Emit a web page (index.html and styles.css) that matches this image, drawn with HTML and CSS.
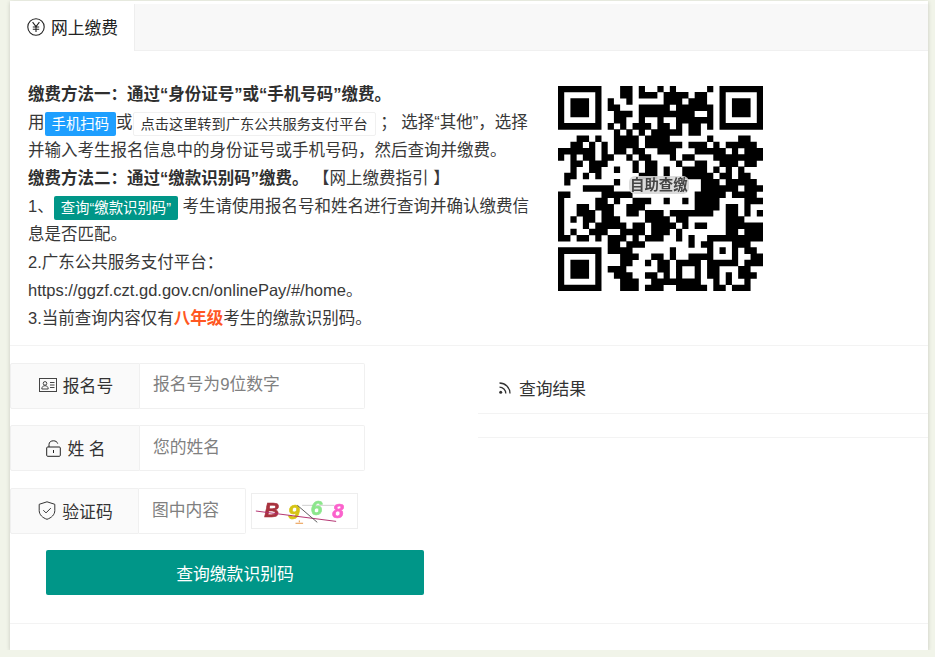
FILE: index.html
```html
<!DOCTYPE html>
<html lang="zh-CN">
<head>
<meta charset="utf-8">
<title>网上缴费</title>
<link rel="stylesheet" href="styles.css">
</head>
<body>
<main class="card">
  <div class="tabs">
    <div class="tab">
      <svg class="ico-rmb" viewBox="0 0 18 18"><circle cx="9" cy="9" r="8.2"/><path d="M5.6 4.2 9 8.6l3.4-4.4M9 8.6v5.4M5.8 9h6.4M5.8 11.2h6.4"/></svg>
      <span>网上缴费</span>
    </div>
    <div class="tab-fill"></div>
  </div>

  <section class="intro">
    <div class="intro-text">
      <p><b>缴费方法一：通过“身份证号”或“手机号码”缴费。</b></p>
      <p>用<a class="btn btn-blue">手机扫码</a>或<a class="btn btn-plain">点击这里转到广东公共服务支付平台</a> ； 选择“其他”，选择并输入考生报名信息中的身份证号或手机号码，然后查询并缴费。</p>
      <p><b>缴费方法二：通过“缴款识别码”缴费。</b> 【网上缴费指引 】</p>
      <p>1、<a class="btn btn-teal">查询“缴款识别码”</a> 考生请使用报名号和姓名进行查询并确认缴费信息是否匹配。</p>
      <p>2.广东公共服务支付平台：</p>
      <p>https://ggzf.czt.gd.gov.cn/onlinePay/#/home。</p>
      <p>3.当前查询内容仅有<b class="hl">八年级</b>考生的缴款识别码。</p>
    </div>
    <div class="qr">
      <svg class="qr-code" viewBox="0 0 33 33">
        <path d="M0 .5h7M26 .5h7M0 1.5h1M6 1.5h1M26 1.5h1M32 1.5h1M0 2.5h1M2 2.5h3M6 2.5h1M26 2.5h1M28 2.5h3M32 2.5h1M0 3.5h1M2 3.5h3M6 3.5h1M26 3.5h1M28 3.5h3M32 3.5h1M0 4.5h1M2 4.5h3M6 4.5h1M26 4.5h1M28 4.5h3M32 4.5h1M0 5.5h1M6 5.5h1M26 5.5h1M32 5.5h1M0 6.5h7M26 6.5h7
        M0 26.5h7M0 27.5h1M6 27.5h1M0 28.5h1M2 28.5h3M6 28.5h1M0 29.5h1M2 29.5h3M6 29.5h1M0 30.5h1M2 30.5h3M6 30.5h1M0 31.5h1M6 31.5h1M0 32.5h7
        M10 .5h2M13 .5h1M16 .5h1M18 .5h1M24 .5h1
        M10 1.5h2M13 1.5h3M17 1.5h4M22 1.5h2
        M8 2.5h1M11 2.5h1M17 2.5h3M21 2.5h3
        M8 3.5h2M13 3.5h5M19 3.5h6
        M9 4.5h3M13 4.5h9M24 4.5h1
        M9 5.5h2M13 5.5h1M16 5.5h1M19 5.5h6
        M8 6.5h1M10 6.5h1M12 6.5h3M16 6.5h2M19 6.5h1M21 6.5h2M24 6.5h1
        M9 7.5h1M11 7.5h1M13 7.5h1M15 7.5h5M21 7.5h2
        M3 8.5h2M6 8.5h1M9 8.5h4M14 8.5h4M24 8.5h1M29 8.5h2
        M2 9.5h2M5 9.5h1M7 9.5h1M9 9.5h4M14 9.5h6M21 9.5h3M25 9.5h1M27 9.5h5
        M0 10.5h6M7 10.5h1M9 10.5h2M12 10.5h2M16 10.5h3M22 10.5h5M28 10.5h1M30 10.5h3
        M0 11.5h1M2 11.5h1M4 11.5h2M7 11.5h2M11 11.5h1M13 11.5h2M18 11.5h1M20 11.5h2M25 11.5h8
        M2 12.5h2M5 12.5h3M12 12.5h1M14 12.5h2M19 12.5h1M22 12.5h2M26 12.5h3M30 12.5h2
        M2 13.5h1M5 13.5h2M9 13.5h1M12 13.5h1M14 13.5h2M17 13.5h1M20 13.5h4M25 13.5h1M27 13.5h1M29 13.5h1
        M1 14.5h2M4 14.5h1M6 14.5h1M13 14.5h3M17 14.5h1M20 14.5h5M26 14.5h2M29 14.5h2
        M1 15.5h1M9 15.5h1M23 15.5h3M27 15.5h5
        M4 16.5h5M23 16.5h6M30 16.5h3
        M0 17.5h2M7 17.5h5M22 17.5h5M28 17.5h4
        M0 18.5h1M6 18.5h2M9 18.5h1M12 18.5h3M17 18.5h1M20 18.5h1M22 18.5h4M30 18.5h3
        M0 19.5h1M3 19.5h2M6 19.5h3M11 19.5h3M22 19.5h4M27 19.5h2M30 19.5h1
        M0 20.5h1M3 20.5h3M7 20.5h2M11 20.5h2M14 20.5h3M18 20.5h7M27 20.5h2M30 20.5h1M32 20.5h1
        M0 21.5h1M2 21.5h1M4 21.5h2M7 21.5h3M14 21.5h4M19 21.5h2M27 21.5h3
        M0 22.5h1M4 22.5h1M6 22.5h5M12 22.5h2M15 22.5h4M20 22.5h1M22 22.5h2M27 22.5h6
        M0 23.5h1M2 23.5h1M5 23.5h3M10 23.5h4M15 23.5h3M19 23.5h1M27 23.5h2M30 23.5h3
        M0 24.5h2M3 24.5h2M6 24.5h1M8 24.5h3M12 24.5h1M14 24.5h3M19 24.5h1M21 24.5h1M24 24.5h9
        M8 25.5h2M11 25.5h3M21 25.5h1M23 25.5h2M28 25.5h3
        M8 26.5h4M18 26.5h1M24 26.5h1M26 26.5h1M28 26.5h1M30 26.5h2
        M10 27.5h3M15 27.5h2M18 27.5h1M21 27.5h4M28 27.5h1M31 27.5h2
        M10 28.5h2M14 28.5h1M16 28.5h2M19 28.5h4M24 28.5h5M30 28.5h3
        M8 29.5h3M16 29.5h2M19 29.5h1M22 29.5h1M24 29.5h2M29 29.5h2
        M9 30.5h3M14 30.5h2M17 30.5h1M19 30.5h1M22 30.5h1M24 30.5h2M27 30.5h1M29 30.5h3
        M10 31.5h3M15 31.5h4M19 31.5h4M25 31.5h1M27 31.5h1M30 31.5h1
        M10 32.5h3M14 32.5h3M19 32.5h5M25 32.5h2M28 32.5h3"/>
      </svg>
      <span class="qr-badge">自助查缴</span>
    </div>
  </section>

  <section class="query">
    <form class="form">
      <div class="field field-first">
        <label class="field-label">
          <svg class="ico" viewBox="0 0 18 14"><rect x=".5" y=".5" width="17" height="13"/><circle cx="6" cy="5.4" r="1.8"/><path d="M2.8 11c0-2.2 1.4-3.3 3.2-3.3S9.200 8.800 9.200 11zM11 4.500h4.500M11 7h4.500M11 9.500h4.500"/></svg>
          <span>报名号</span>
        </label>
        <input class="field-input" placeholder="报名号为9位数字">
      </div>
      <div class="field">
        <label class="field-label">
          <svg class="ico ico-lock" viewBox="0 0 15 17"><rect x=".7" y="7" width="13.600" height="9.300" rx="1"/><path d="M3 7V4.500C3 2 5 .8 7.500 .8c2 0 3.700 1 4.200 2.800M7.500 10v3"/></svg>
          <span>姓 名</span>
        </label>
        <input class="field-input" placeholder="您的姓名">
      </div>
      <div class="field field-code">
        <label class="field-label">
          <svg class="ico ico-shield" viewBox="0 0 18 19"><path d="M9 .8 16.800 3.300v6.200c0 4.300-3.400 7.300-7.800 8.800-4.400-1.500-7.800-4.500-7.800-8.800V3.300zM5.300 9.200l2.700 2.700 4.800-4.800"/></svg>
          <span>验证码</span>
        </label>
        <input class="field-input" placeholder="图中内容">
        <svg class="captcha" viewBox="0 0 107 36">
          <path class="l-grey" d="M51 12h34"/>
          <text class="c-b" x="11" y="24">B</text>
          <text class="c-9" x="36" y="26">9</text>
          <text class="c-6" x="60" y="22">6</text>
          <text class="c-8" x="83" y="25">8</text>
          <path class="l-red" d="M2 18 87 29"/>
          <path class="l-dark" d="M46 12 67 30"/>
          <path class="l-orange" d="M44 31h8M48 28v2"/>
        </svg>
      </div>
      <button class="submit" type="button">查询缴款识别码</button>
    </form>
    <div class="result">
      <div class="result-title">
        <svg class="ico-rss" viewBox="0 0 12 12"><circle cx="1.700" cy="10.300" r="1.500"/><path d="M.5 5.200a6.300 6.300 0 0 1 6.300 6.300M.5 1a10.500 10.500 0 0 1 10.500 10.500"/></svg>
        <span>查询结果</span>
      </div>
      <div class="result-body"></div>
    </div>
  </section>
</main>
</body>
</html>
```

FILE: styles.css
```css
* { box-sizing: border-box; }
html, body { margin: 0; padding: 0; }
body {
  background: #f1f4e9;
  color: #333;
  font-family: "Liberation Sans", "Noto Sans CJK SC", sans-serif;
  font-size: 16.8px;
}
.card {
  margin: 1px 7px 0 10px;
  padding-top: 3px;
  padding-bottom: 26px;
  background: #fff;
  box-shadow: 0 1px 4px rgba(0, 0, 0, .18);
}
.tabs { display: flex; height: 47px; }
.tab {
  display: flex;
  align-items: center;
  gap: 6px;
  width: 125px;
  padding: 0 0 1px 17px;
  background: #fff;
  border-right: 1px solid #eee;
  color: #222;
}
.tab-fill { flex: 1; background: #f8f8f8; border-bottom: 1px solid #f0f0f0; }
.ico-rmb { width: 18px; height: 18px; fill: none; stroke: #222; stroke-width: 1.1; }

.intro {
  display: flex;
  padding: 29px 0 13px 18px;
  border-bottom: 1px solid #f3f3f3;
}
.intro-text { width: 505px; font-size: 16.500px; line-height: 28px; color: #383838; }
.intro-text p { margin: 0; }
.intro-text b { color: #2f2f2f; }
.intro-text .hl { color: #ff5722; }
.btn {
  display: inline-block;
  height: 24px;
  line-height: 24px;
  border-radius: 2px;
  font-size: 14.400px;
  vertical-align: top;
  margin-top: 4px;
}
.btn-blue { padding: 0 7px; background: #1e9fff; color: #fff; }
.btn-teal { padding: 0 7px; background: #009688; color: #fff; }
.btn-plain { padding: 0 7px; background: #fff; border: 1px solid #f0f0f0; color: #333; line-height: 22px; font-size: 14.200px; }

.qr { position: relative; width: 205px; height: 205px; margin: 6px 0 0 25px; }
.qr-code { display: block; width: 205px; height: 205px; filter: blur(.6px); }
.qr-code path { fill: none; stroke: #000; stroke-width: 1.05; }
.qr-badge {
  position: absolute;
  left: 71px;
  top: 90px;
  padding: 0 1px;
  border-radius: 6px;
  background: rgba(215, 215, 215, .9);
  color: #444;
  font-size: 14.400px;
  font-weight: bold;
  line-height: 18px;
  filter: blur(.5px);
}

.query { display: flex; height: 278px; border-bottom: 1px solid #f3f3f3; }
.form { width: 468px; padding-top: 17px; }
.field { display: flex; width: 355px; height: 46px; margin-bottom: 16.400px; }
.field-label {
  display: flex;
  align-items: center;
  justify-content: center;
  gap: 6px;
  width: 130px;
  padding-left: 2px;
  background: #fafafa;
  border: 1px solid #f0f0f0;
  border-radius: 2px 0 0 2px;
  color: #333;
}
.field-input {
  flex: 1;
  min-width: 0;
  padding: 0 13px;
  border: 1px solid #f0f0f0;
  border-left: 0;
  border-radius: 0 2px 2px 0;
  outline: 0;
  background: #fff;
  font: inherit;
  color: #333;
}
.field-input::placeholder { color: #808080; opacity: 1; }
.field-first .field-label { padding-bottom: 3px; }
.field-first .field-input { padding-bottom: 2px; }
.field-code { width: 348px; align-items: center; }
.field-code .field-label, .field-code .field-input { height: 46px; }
.field-code .field-input { flex: 0 0 107px; width: 107px; }
.ico { width: 18px; height: 14px; fill: none; stroke: #444; stroke-width: 1; }
.ico-lock { width: 15px; height: 17px; stroke: #222; }
.ico-shield { width: 18px; height: 19px; stroke: #333; }
.captcha { flex: none; width: 107px; height: 36px; margin-left: 5px; border: 1px solid #eee; filter: blur(.5px); }
.captcha text { font: italic bold 22px "Liberation Sans", sans-serif; stroke-width: .6; }
.c-b { fill: #a8323e; stroke: #a8323e; }
.c-9 { fill: #d6c414; stroke: #d6c414; }
.c-6 { fill: #8ce68c; stroke: #8ce68c; }
.c-8 { fill: #fb62cc; stroke: #fb62cc; }
.captcha path { fill: none; stroke-width: 1; }
.l-grey { stroke: #ccc; }
.l-red { stroke: #b02a6b; }
.l-dark { stroke: #555; }
.l-orange { stroke: #e8913a; }
.submit {
  display: block;
  width: 378px;
  height: 45px;
  margin: 1px 0 0 36px;
  border: 0;
  border-radius: 2px;
  background: #009688;
  color: #fff;
  font: inherit;
}
.result { flex: 1; padding-top: 19px; }
.result-title {
  display: flex;
  align-items: center;
  gap: 8px;
  height: 49px;
  padding: 0 0 2px 21px;
  border-bottom: 1px solid #f3f3f3;
  color: #333;
}
.ico-rss { width: 12px; height: 12px; fill: none; stroke: #333; stroke-width: 1.300; }
.ico-rss circle { fill: #333; stroke: none; }
.result-body { height: 24px; border-bottom: 1px solid #f3f3f3; }
```
